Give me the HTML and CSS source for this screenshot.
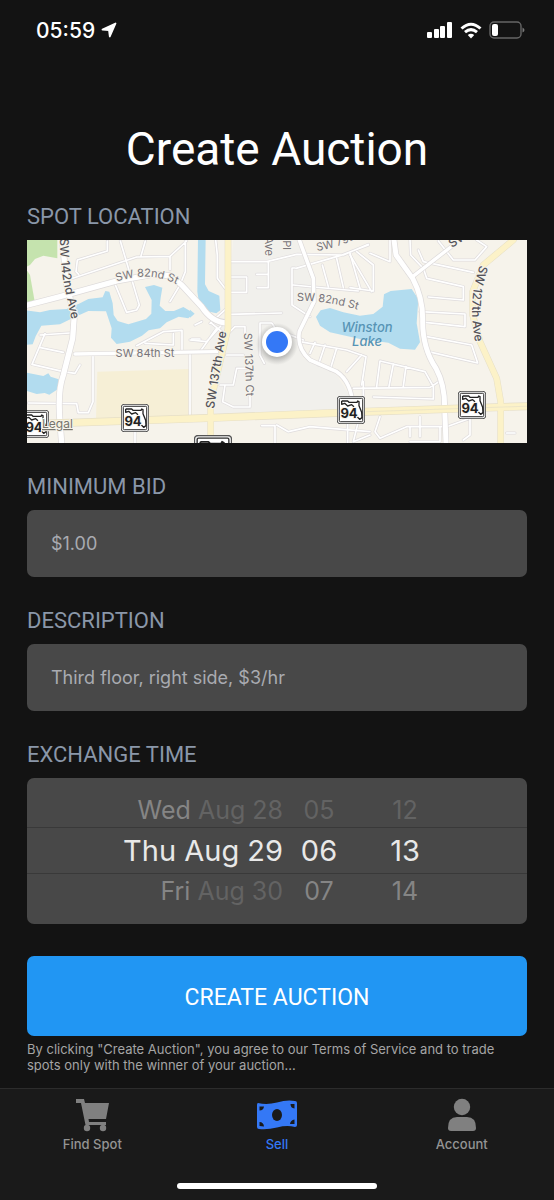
FILE: index.html
```html
<!DOCTYPE html>
<html lang="en">
<head>
<meta charset="utf-8">
<meta name="viewport" content="width=device-width, initial-scale=1">
<title>Create Auction</title>
<link rel="stylesheet" href="styles.css">
</head>
<body>
<header class="status">
  <div class="status-time">
    <span>05:59</span>
    <svg class="ico-loc" viewBox="0 0 16 16" aria-hidden="true"><path d="M14.500 1.500 8.800 14.500 8 8.200 1.500 7.600Z" fill="#fff" stroke="#fff" stroke-width="1.800" stroke-linejoin="round"/></svg>
  </div>
  <div class="status-icons">
    <svg class="ico-signal" viewBox="0 0 26 16" aria-hidden="true"><g fill="#fff"><rect x="0" y="10" width="5" height="6" rx="1"/><rect x="7" y="7" width="5" height="9" rx="1"/><rect x="13" y="4" width="5" height="12" rx="1"/><rect x="20" y="0" width="5" height="16" rx="1"/></g></svg>
    <svg class="ico-wifi" viewBox="0 0 22 17" aria-hidden="true"><g fill="none" stroke="#fff" stroke-width="3"><path d="M1.500 6.500Q11-2 20.500 6.500"/><path d="M5 10.200Q11 5 17 10.200"/></g><path d="M11 16.500 7.800 13Q11 10.300 14.200 13Z" fill="#fff"/></svg>
    <svg class="ico-battery" viewBox="0 0 36 18" aria-hidden="true"><rect x="1" y="1" width="31" height="16" rx="4" fill="none" stroke="#666" stroke-width="1.400"/><rect x="3" y="3" width="6" height="12" rx="2" fill="#fff"/><path d="M33.500 6.500q2 1 2 2.500t-2 2.500z" fill="#777"/></svg>
  </div>
</header>

<main class="page">
  <h1 class="title">Create Auction</h1>

  <form class="form">
    <section class="field">
      <h2 class="label">SPOT LOCATION</h2>
      <svg class="map" viewBox="0 0 500 203" preserveAspectRatio="xMidYMid slice" role="img" aria-label="Map of the spot location">
        <defs>
          <path id="p142" d="M33-2C33 32 38 50 46 86"/>
          <path id="p82" d="M86 43Q122 29 153 46"/>
          <path id="p82b" d="M270 61Q304 60 340 73"/>
          <path id="p79" d="M290 11Q316 7 344-9"/>
          <path id="p127" d="M453 25Q439 63 450 110"/>
          <radialGradient id="glow"><stop offset=".6" stop-color="#555" stop-opacity=".4"/><stop offset="1" stop-color="#777" stop-opacity="0"/></radialGradient>
          <symbol id="shield" viewBox="0 0 84 84">
            <rect x="1" y="1" width="82" height="82" rx="8" fill="#eee" stroke="#555" stroke-width="3"/>
            <rect x="7" y="7" width="70" height="70" rx="3" fill="#fff" stroke="#333" stroke-width="3"/>
            <path d="M14 15h18l4 4h24l2-4 4 2v12l8 20 1 16-7 5-7-7M14 15v10l9-3 9 8 12-4 7 6" fill="none" stroke="#222" stroke-width="4" stroke-linejoin="round"/>
          </symbol>
          <g id="lanes">
            <path d="M262 18V48L172 75 168 110 176 118M158 130 350 66 450 64V104M301 18 358 210 350 225 320 232 282 140M362 66 376 18M450 64 500 18M496 18V110L480 150 450 200M60 300 150 294M75 296 36 388 130 410 165 415 180 390M62 338 130 352M219 365V500L205 533H175L170 506 25 504M350 332 430 290 486 286V350M375 325 460 330V296M510 355V545M525 270 545 260M515 312H540M345 590V625"/>
            <path d="M587 15 592 60V130L615 160M630 80H740L830 58 970 60 1045 28M630 126H680V172H632M745 80V158H712M710 118H745M630 238 785 234M620 300 645 275H675V300M600 450H640L650 400H680M620 360H670M615 450 608 500 640 516H690V465M733 385 720 360V264H755L770 285 850 315M840 320 980 345 1038 365 1025 450M885 322 870 355M915 330 895 390M950 340 930 405M980 410 1025 360M825 99H816V210L870 245M820 150 880 156 1015 168M828 100 960 62 1045 30M907 90 925 155M950 70 970 158M990 55 1020 160M570 265 620 220M510 315 560 320 605 270M575 265 605 290M540 350 590 280M725 572H765V625M770 570 805 590 870 575 1050 590M983 560V625"/>
            <path d="M990 60 1055 170M1010 50 1060 90V168L990 158M1050 55 1110 80V15M1170 15 1172 60 1210 100 1220 130 1330 155V195L1225 186M1195 45 1210 80 1360 112M1255 18 1300 75 1365 75 1400 35 1370 15M1200 230 1335 237V275L1215 262M1220 305 1355 330 1373 384 1225 350M1000 460 1230 457 1260 438M1070 455 1080 378 1215 410 1240 455V492L1060 486M1120 387 1107 454M1158 394 1150 454M1030 440V490M1080 545 1065 590 1080 610 1160 575H1280L1350 550V600L1330 615M1200 545V605M1170 605V575M1260 575V620H1170M1460 594H1485M1025 520 1000 620 1050 600"/>
          </g>
        </defs>
        <rect width="500" height="203" fill="#f6f3eb"/>
        <g transform="translate(-7 -5) scale(.333333)" stroke-linecap="round" stroke-linejoin="round">
          <path d="M640 15H840L880 170 870 240 830 310 850 370 950 420 1000 500V530L570 545V250H620Z" fill="#f1f0ec"/>
          <path d="M232 410 510 402 516 545 228 552Z" fill="#f6efd6"/>
          <path d="M15 10H112V70L70 62 45 72 30 90 15 98Z" fill="#c5e3ae"/><path d="M15 98 30 120 45 205 15 215Z" fill="#c5e3ae"/>
          <g fill="#b2dcef">
            <path d="M15 226 60 232 90 225 140 222 180 205 205 192 248 187 256 168 268 170 278 205 281 240 293 258 325 268 378 252 394 236 395 195 375 156 402 150 427 158 422 188 419 212 436 228 462 228 490 216 522 235 505 250 476 245 440 262 420 280 386 286 366 302 330 320 290 327 273 308 275 280 258 229 205 228 160 248 120 268 64 272 47 304 38 328 15 330Z"/>
            <path d="M15 412 70 423 85 415 92 425 116 433 113 463 88 479 74 474 50 477 15 466Z"/>
            <path d="M534 10H557L555 148 566 168 598 182 601 226 589 235 569 230 537 202 532 170Z"/>
            <path d="M510 224 524 236 510 248Z"/>
            <path d="M888 246 902 226 930 219 970 232 1020 242 1060 237 1088 215 1092 178 1112 168 1175 162 1195 192 1190 265 1200 322 1185 344 1140 341 1105 323 1020 312 930 292 900 272Z"/>
          </g>
          <use href="#lanes" fill="none" stroke="#dfdcdd" stroke-width="9"/>
          <use href="#lanes" fill="none" stroke="#fff" stroke-width="5"/>
          <g fill="none" stroke="#dddada">
            <path d="M15 212 120 185 290 138 400 118 450 122 485 150 545 215Q575 262 620 264M127 15 140 150 163 240 158 310 130 420Q112 470 120 560L125 625" stroke-width="20"/>
            <path d="M165 357 590 350M1178 125 1300 30" stroke-width="14"/>
            <path d="M838 15 880 130 882 200 838 290Q830 340 870 375L950 410Q995 440 1000 520" stroke-width="15"/>
            <path d="M1122 15 1128 60 1178 130Q1210 190 1208 260 1208 340 1248 400 1275 450 1274 520L1278 625" stroke-width="19"/>
          </g>
          <g fill="none" stroke="#fff">
            <path d="M15 212 120 185 290 138 400 118 450 122 485 150 545 215Q575 262 620 264M127 15 140 150 163 240 158 310 130 420Q112 470 120 560L125 625" stroke-width="16"/>
            <path d="M165 357 590 350M1178 125 1300 30" stroke-width="10"/>
            <path d="M838 15 880 130 882 200 838 290Q830 340 870 375L950 410Q995 440 1000 520" stroke-width="11"/>
            <path d="M1122 15 1128 60 1178 130Q1210 190 1208 260 1208 340 1248 400 1275 450 1274 520L1278 625" stroke-width="15"/>
          </g>
          <g fill="none" stroke="#e6dfc7">
            <path d="M624 10V280L572 500V630M1480 15 1390 90 1358 170V240L1380 320 1430 430 1442 500V630" stroke-width="20"/>
            <path d="M15 568 540 550 1040 530 1540 513" stroke-width="24"/>
          </g>
          <g fill="none" stroke="#fcf2c8">
            <path d="M624 10V280L572 500V630M1480 15 1390 90 1358 170V240L1380 320 1430 430 1442 500V630" stroke-width="17"/>
            <path d="M15 568 540 550 1040 530 1540 513" stroke-width="20"/>
          </g>
          <path d="M1040 530 1540 513" fill="none" stroke="#e6dfc7" stroke-width="2"/>
        </g>
        <g class="map-road">
          <text><textPath href="#p82" startOffset="50%" text-anchor="middle">SW 82nd St</textPath></text>
          <text x="118" y="117" text-anchor="middle">SW 84th St</text>
          <text><textPath href="#p82b">SW 82nd St</textPath></text>
          <text><textPath href="#p79">SW 79th St</textPath></text>
          <text transform="translate(217 93) rotate(88)">SW 137th Ct</text>
          <text transform="translate(238 16) rotate(90)" text-anchor="end">Ave</text>
          <text transform="translate(256 10) rotate(90)" text-anchor="end">Pl</text>
        </g>
        <g class="map-road map-avenue">
          <text><textPath href="#p142">SW 142nd Ave</textPath></text>
          <text><textPath href="#p127">SW 127th Ave</textPath></text>
          <text transform="translate(187 169) rotate(-81)">SW 137th Ave</text>
          <text transform="translate(425 8) rotate(-34)">SW 80th</text>
        </g>
        <g class="map-lake" text-anchor="middle"><text x="340" y="92">Winston</text><text x="340" y="106">Lake</text></g>
        <use href="#shield" x="-6" y="170" width="28" height="28"/><use href="#shield" x="94" y="164" width="28" height="28"/><use href="#shield" x="310" y="156" width="28" height="28"/><use href="#shield" x="431" y="151" width="28" height="28"/><use href="#shield" x="167" y="195" width="38" height="38"/>
        <g class="map-shield" text-anchor="middle"><text x="7" y="192">94</text><text x="106" y="186">94</text><text x="322" y="178">94</text><text x="443" y="173">94</text></g>
        <text class="map-legal" x="15" y="188">Legal</text>
        <circle cx="250" cy="104" r="21" fill="url(#glow)"/>
        <circle cx="250" cy="102" r="15" fill="#fff"/><circle cx="250" cy="102" r="11" fill="#3478f6"/>
      </svg>
    </section>

    <div class="field">
      <label class="label" for="bid">MINIMUM BID</label>
      <input class="input" id="bid" type="text" placeholder="$1.00">
    </div>
    <div class="field">
      <label class="label" for="desc">DESCRIPTION</label>
      <input class="input" id="desc" type="text" placeholder="Third floor, right side, $3/hr">
    </div>
    <section class="field">
      <h2 class="label">EXCHANGE TIME</h2>
      <div class="picker">
        <div class="picker-row before" aria-hidden="true">
          <span class="date"><span class="day">Wed</span> Aug 28</span><span>05</span><span>12</span>
        </div>
        <div class="picker-row current">
          <select class="date" aria-label="Date"><option>Thu Aug 29</option></select>
          <select aria-label="Hour"><option>06</option></select>
          <select aria-label="Minute"><option>13</option></select>
        </div>
        <div class="picker-row after" aria-hidden="true">
          <span class="date"><span class="day">Fri</span> Aug 30</span><span class="day">07</span><span class="day">14</span>
        </div>
      </div>
    </section>
    <button class="submit" type="button">CREATE AUCTION</button>
    <p class="terms">By clicking "Create Auction", you agree to our Terms of Service and to trade spots only with the winner of your auction...</p>
  </form>
</main>

<footer class="bottom">
  <nav class="tabs">
    <a class="tab" href="#find">
      <svg class="tab-icon" viewBox="0 0 44 34" aria-hidden="true"><g fill="#808080"><path d="M6 1h8l1 4h24l-3 16H18.500l.5 3h17v3H15.500L11 5H6z"/><circle cx="17" cy="30" r="3.200"/><circle cx="33" cy="30" r="3.200"/></g></svg>
      <span>Find Spot</span>
    </a>
    <a class="tab active" href="#sell" aria-current="page">
      <svg class="tab-icon" viewBox="0 0 44 34" aria-hidden="true"><path d="M3 5Q2 5 2 7V29Q2 31 4 31 12 32 22 29.500T40 29Q42 29 42 27V5Q42 3 40 3 32 1.500 22 4.500 12 7 3 5Z" fill="#3478f6"/><g fill="#1a1a1a"><ellipse cx="22" cy="17" rx="5" ry="6"/><path d="M4.500 8.500h4.500q-.5 4-4.500 4zM39.500 6v4.500q-4-.5-4-4.500zM4.500 24q4 0 4.500 4.500l-4.500-.5zM39.500 21.500v4.500h-4.500q.5-4 4.500-4.500z"/></g></svg>
      <span>Sell</span>
    </a>
    <a class="tab" href="#account">
      <svg class="tab-icon" viewBox="0 0 44 34" aria-hidden="true"><g fill="#808080"><circle cx="22" cy="9" r="8.200"/><path d="M8 30Q8 19 17 19h10q9 0 9 11 0 3-3 3H11q-3 0-3-3Z"/></g></svg>
      <span>Account</span>
    </a>
  </nav>
  <div class="home-bar"></div>
</footer>
</body>
</html>
```

FILE: styles.css
```css
* { box-sizing: border-box; }

body {
  margin: 0;
  min-height: 100vh;
  display: flex;
  flex-direction: column;
  background: #131313;
  color: #fff;
  font-family: Inter, "Liberation Sans", sans-serif;
}

.status {
  display: flex;
  justify-content: space-between;
  align-items: center;
  height: 60px;
  padding: 0 29px 0 36px;
}
.status-time { display: flex; align-items: center; gap: 6px; font-size: 21px; font-weight: 500; }
.status-icons { display: flex; align-items: center; gap: 7px; }
.ico-loc { width: 16px; height: 16px; }
.ico-signal { width: 26px; height: 16px; }
.ico-wifi { width: 22px; height: 17px; }
.ico-battery { width: 36px; height: 18px; }

.page { padding: 0 27px 14px; }

.title {
  margin: 61px 0 0;
  font: 400 46px/56px Roboto, sans-serif;
  text-align: center;
}

.form { display: flex; flex-direction: column; }
.field { display: flex; flex-direction: column; gap: 10px; margin-top: 31px; }
.title + .form .field:first-child { margin-top: 27px; }

.label {
  margin: 0;
  color: #8a97a9;
  font: 400 22px/26px Roboto, sans-serif;
}

.map { display: block; width: 100%; height: auto; }
.map text { paint-order: stroke; stroke: #f6f3eb; stroke-width: 2px; stroke-linejoin: round; }
.map-road { font-size: 11px; fill: #77747a; }
.map-avenue { font-size: 12px; font-weight: 500; fill: #55535a; }
.map-lake { font-size: 13px; font-style: italic; font-weight: 500; fill: #5794b5; }
.map .map-lake text { stroke: none; }
.map-shield { font-size: 13px; font-weight: 700; fill: #222; }
.map-legal { font-size: 12px; fill: #77756c; text-decoration: underline; }

.input {
  width: 100%;
  height: 67px;
  padding: 0 24px;
  border: 0;
  border-radius: 7px;
  background: #484848;
  color: #fff;
  font: 400 18px Inter, sans-serif;
}
.input::placeholder { color: #a9abb1; opacity: 1; }

.picker { border-radius: 7px; background: #484848; overflow: hidden; }
.picker-row {
  display: grid;
  grid-template-columns: 160px 72px 100px;
  justify-content: center;
  padding-left: 24px;
  font-size: 25px;
  line-height: 28px;
  text-align: center;
  color: #636363;
}
.picker-row .date { text-align: right; }
.day { color: #858585; }
.before { padding-top: 18px; padding-bottom: 3px; }
.after { padding-top: 3px; padding-bottom: 19px; }
.current { border-top: 1px solid #393939; border-bottom: 1px solid #393939; }
.current select {
  appearance: none;
  width: 100%;
  height: 45px;
  padding: 0;
  border: 0;
  background: none;
  color: #e8e8e8;
  font: 400 29px Inter, sans-serif;
  text-align: center;
}

.submit {
  height: 80px;
  margin-top: 32px;
  padding-top: 4px;
  border: 0;
  border-radius: 7px;
  background: #2196f3;
  color: #fff;
  font: 400 23px Roboto, sans-serif;
}

.terms { margin: 5px 0 0; color: #a5a5a5; font-size: 13px; line-height: 16px; }

.bottom {
  margin-top: auto;
  padding-bottom: 11px;
  border-top: 1px solid #2c2c2c;
  background: #1a1a1a;
}
.tabs { display: flex; }
.tab {
  flex: 1;
  display: flex;
  flex-direction: column;
  align-items: center;
  gap: 3px;
  padding-top: 9px;
  color: #949494;
  font-size: 13px;
  font-weight: 500;
  line-height: 18px;
  text-decoration: none;
}
.tab.active { color: #3478f6; }
.tab-icon { width: 44px; height: 34px; }
.home-bar {
  width: 36%;
  height: 6px;
  margin: 30px auto 0;
  border-radius: 3px;
  background: #fff;
}
```
